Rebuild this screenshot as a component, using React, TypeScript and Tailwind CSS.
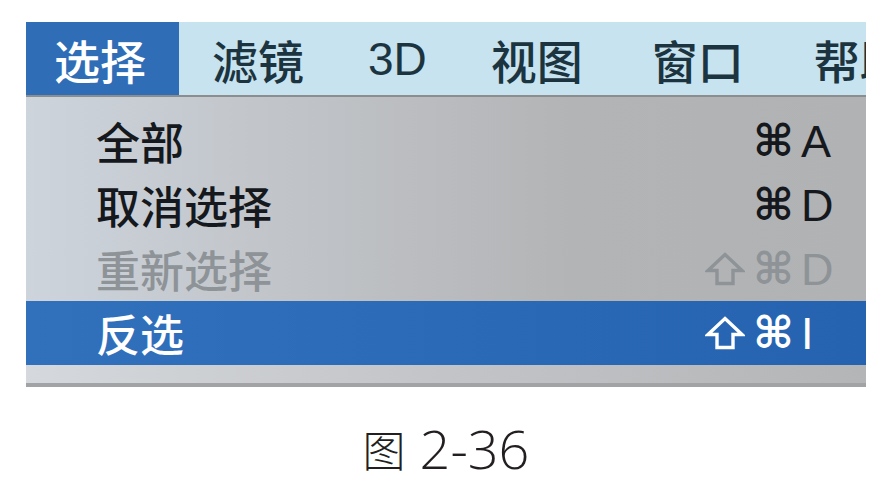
import React from "react";

const cjk = { fontFamily: '"Noto Sans CJK SC", "Noto Sans", sans-serif' };
const sym = { fontFamily: '"DejaVu Sans", "Liberation Sans", sans-serif' };
const lat = { fontFamily: '"Liberation Sans", "DejaVu Sans", sans-serif' };

type Item = { label: string; shift?: boolean; key: string; state?: "normal" | "disabled" | "active" };

const items: Item[] = [
  { label: "全部", key: "A" },
  { label: "取消选择", key: "D" },
  { label: "重新选择", key: "D", shift: true, state: "disabled" },
  { label: "反选", key: "I", shift: true, state: "active" },
];

function ShiftIcon() {
  return (
    <svg width="40" height="34" viewBox="0 0 40 34" fill="none" stroke="currentColor" strokeWidth="3.4" strokeLinejoin="miter">
      <path d="M20 2.5 L37 18.5 L28 18.5 L28 31.5 L12 31.5 L12 18.5 L3 18.5 Z" />
    </svg>
  );
}

export default function App() {
  return (
    <div className="w-[892px] h-[495px] bg-white flex flex-col items-center overflow-hidden">
      <div className="mt-[22px] w-[840px] flex flex-col">
        {/* Menu bar */}
        <div className="h-[73px] bg-[#c6e3ef] flex items-stretch text-[46px] leading-none font-medium text-[#1c3440] whitespace-nowrap overflow-hidden" style={cjk}>
          <div className="shrink-0 bg-[#2f6db6] text-white pl-[28px] pr-[33px] flex items-center">选择</div>
          <div className="shrink-0 pl-[33px] pr-[32px] flex items-center">滤镜</div>
          <div className="shrink-0 px-[32px] flex items-center" style={lat}>3D</div>
          <div className="shrink-0 pl-[32px] pr-[34px] flex items-center">视图</div>
          <div className="shrink-0 pl-[35px] pr-[35px] flex items-center">窗口</div>
          <div className="shrink-0 pl-[35px] flex items-center">帮助</div>
        </div>
        <div className="h-[2px] bg-[#8b8d8f]" />
        {/* Menu body */}
        <div className="flex flex-col pt-[12px] bg-[linear-gradient(to_right,#cdd4dc_0%,#bfc2c6_35%,#b3b4b6_65%,#b1b2b4_100%)]">
          {items.map((it, i) => {
            const active = it.state === "active";
            const disabled = it.state === "disabled";
            const color = active ? "text-white" : disabled ? "text-[#8e9397]" : "text-[#15191d]";
            return (
              <div
                key={i}
                className={`h-[64px] flex items-center pl-[70px] pr-[30px] ${color} ${
                  active ? "bg-[linear-gradient(to_right,#3171bc,#2563b1)]" : ""
                }`}
              >
                <div className="flex-1 text-[44px] leading-none font-medium" style={cjk}>
                  {it.label}
                </div>
                <div className="w-[131px] flex items-center leading-none">
                  <span className="w-[48px] flex items-center">{it.shift ? <ShiftIcon /> : null}</span>
                  <span className="w-[48px] text-[44px] font-bold" style={sym}>⌘</span>
                  <span className="text-[45px]" style={lat}>{it.key}</span>
                </div>
              </div>
            );
          })}
          <div className="h-[18px] bg-[linear-gradient(to_right,#d5d8dc,#c2c4c7_50%,#b4b5b7)]" />
          <div className="h-[4px] bg-[#a2a3a5]" />
        </div>
      </div>
      {/* Caption */}
      <div className="mt-[34px] flex items-center text-[#231f20] leading-none">
        <span className="text-[43px] font-light" style={cjk}>图</span>
        <span className="ml-[14px] text-[54px] font-light" style={{ fontFamily: '"Open Sans", "Liberation Sans", sans-serif' }}>2-36</span>
      </div>
    </div>
  );
}
